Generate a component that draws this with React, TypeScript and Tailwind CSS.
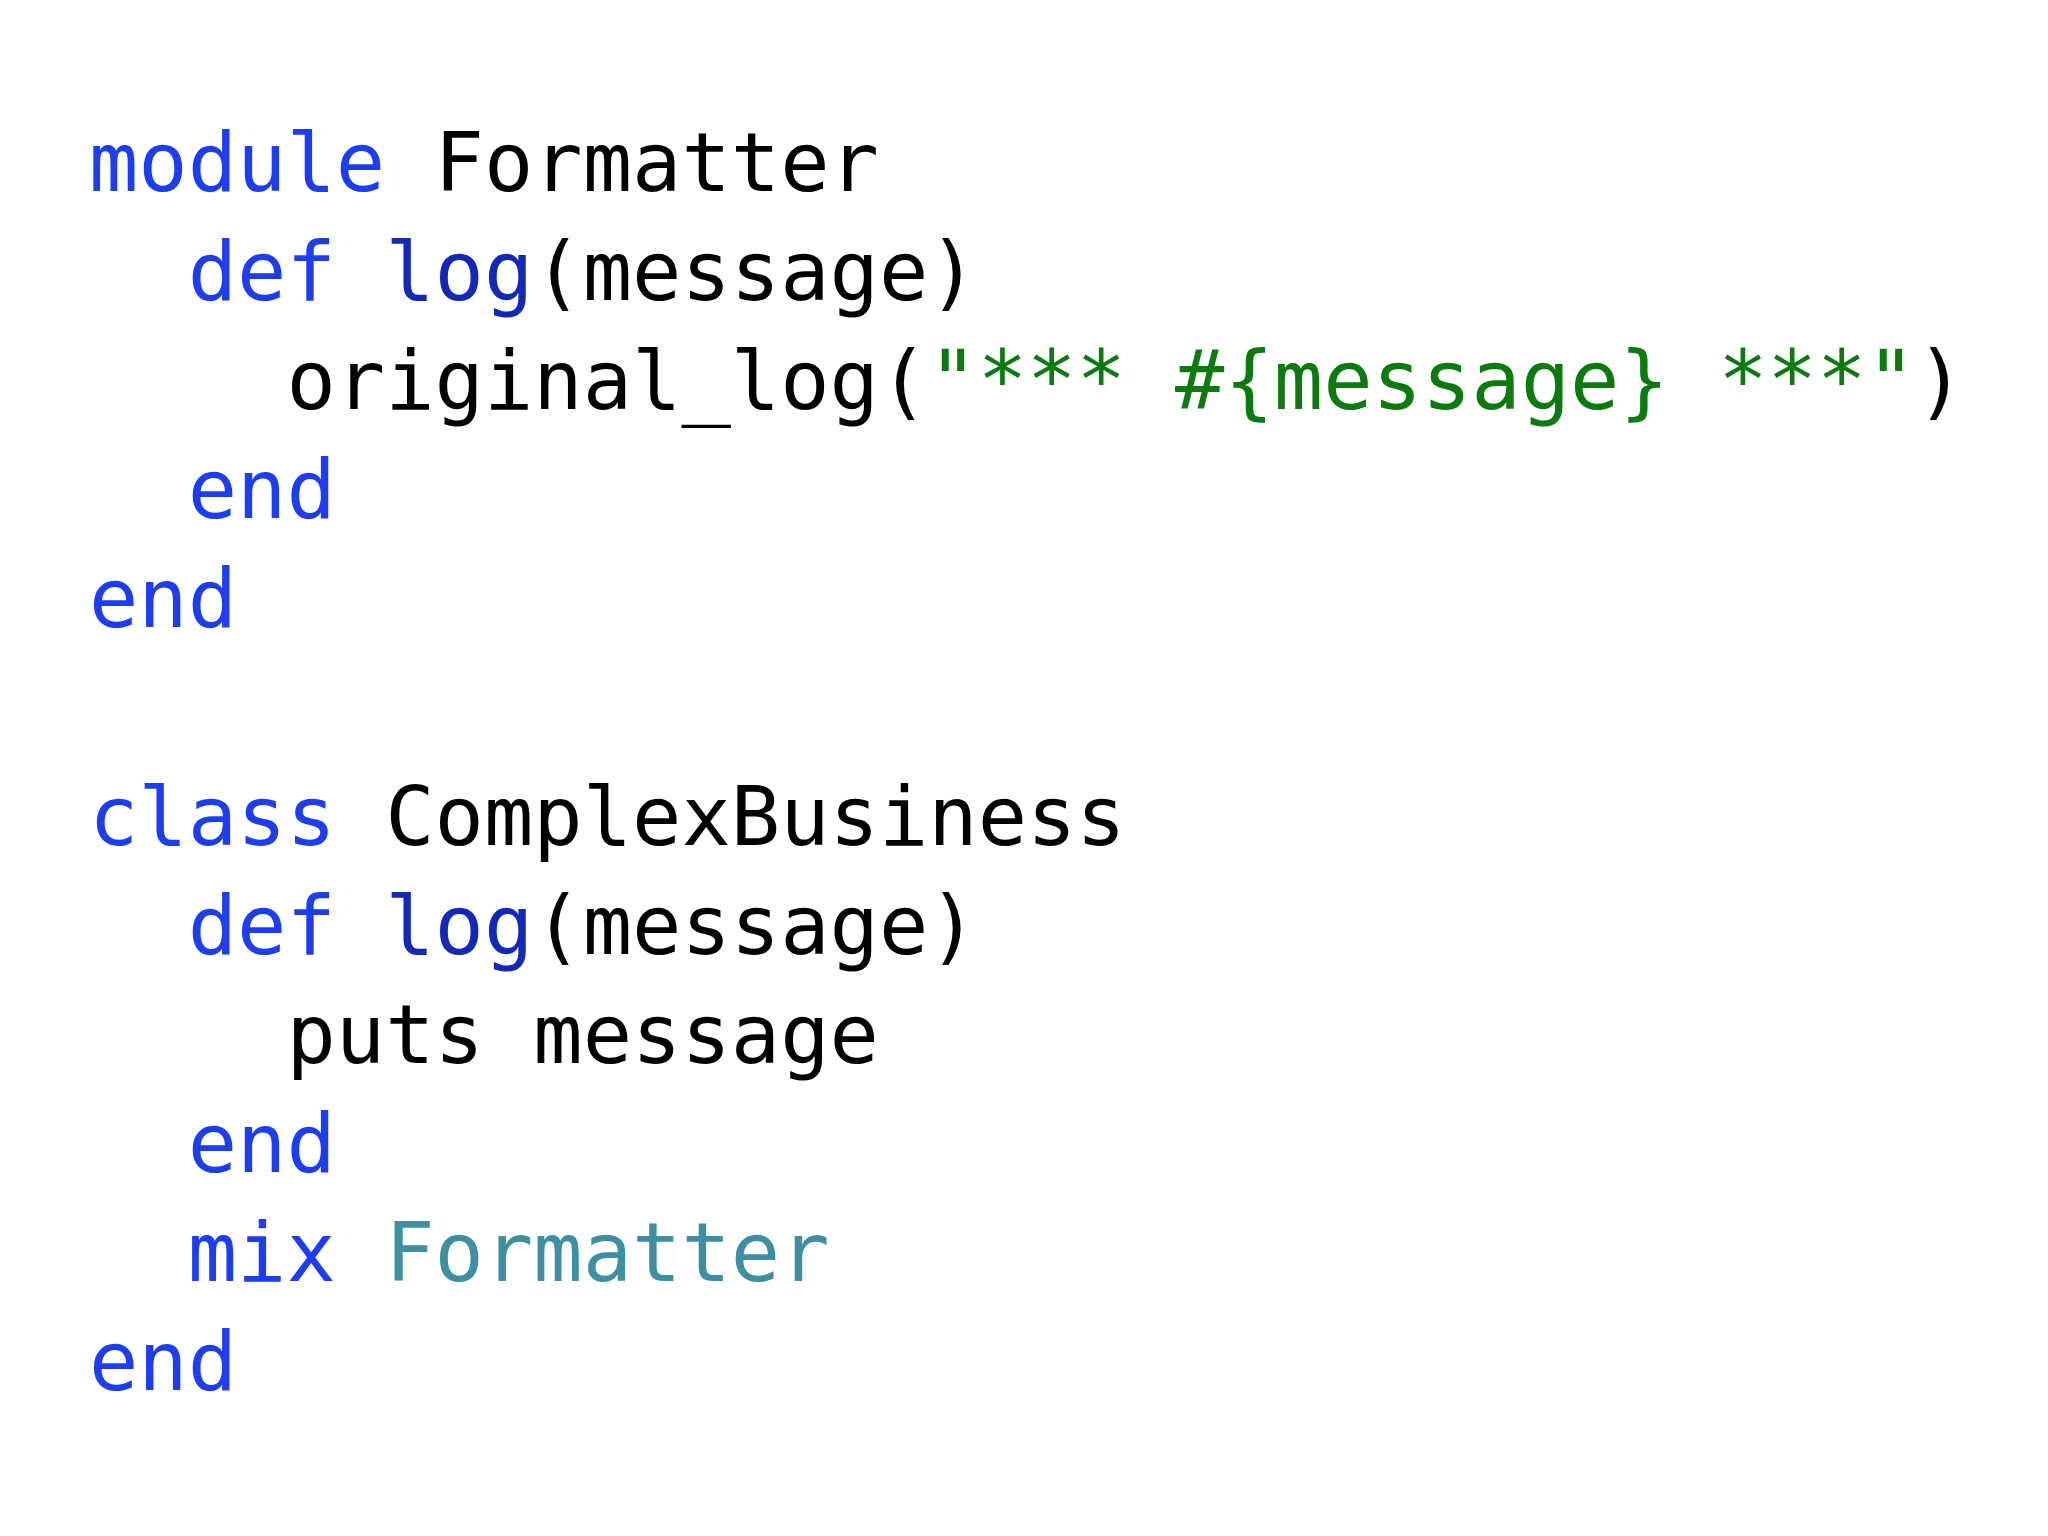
type Token = { text: string; kind?: "kw" | "fn" | "str" | "const" };

const kindClass: Record<string, string> = {
  kw: "text-[#1d3df2]",
  fn: "text-[#1327b8]",
  str: "text-[#0b7a0f]",
  const: "text-[#3d8fa1]",
};

// each line: indent level (2 spaces) + tokens
const lines: { indent: number; tokens: Token[] }[] = [
  { indent: 0, tokens: [{ text: "module", kind: "kw" }, { text: " Formatter" }] },
  {
    indent: 1,
    tokens: [
      { text: "def", kind: "kw" },
      { text: " " },
      { text: "log", kind: "fn" },
      { text: "(message)" },
    ],
  },
  {
    indent: 2,
    tokens: [
      { text: "original_log(" },
      { text: '"*** #{message} ***"', kind: "str" },
      { text: ")" },
    ],
  },
  { indent: 1, tokens: [{ text: "end", kind: "kw" }] },
  { indent: 0, tokens: [{ text: "end", kind: "kw" }] },
  { indent: 0, tokens: [] },
  { indent: 0, tokens: [{ text: "class", kind: "kw" }, { text: " ComplexBusiness" }] },
  {
    indent: 1,
    tokens: [
      { text: "def", kind: "kw" },
      { text: " " },
      { text: "log", kind: "fn" },
      { text: "(message)" },
    ],
  },
  { indent: 2, tokens: [{ text: "puts message" }] },
  { indent: 1, tokens: [{ text: "end", kind: "kw" }] },
  {
    indent: 1,
    tokens: [
      { text: "mix", kind: "kw" },
      { text: " " },
      { text: "Formatter", kind: "const" },
    ],
  },
  { indent: 0, tokens: [{ text: "end", kind: "kw" }] },
];

export default function App() {
  return (
    <div className="w-[2048px] h-[1536px] bg-white overflow-hidden pt-[108px] pl-[89px]">
      <pre className="font-['DejaVu_Sans_Mono',Menlo,monospace] text-[82px] leading-[109px] text-black whitespace-pre">
        {lines.map((line, i) => (
          <div key={i} className="h-[109px]">
            {"  ".repeat(line.indent)}
            {line.tokens.map((t, j) => (
              <span key={j} className={t.kind ? kindClass[t.kind] : undefined}>
                {t.text}
              </span>
            ))}
          </div>
        ))}
      </pre>
    </div>
  );
}
